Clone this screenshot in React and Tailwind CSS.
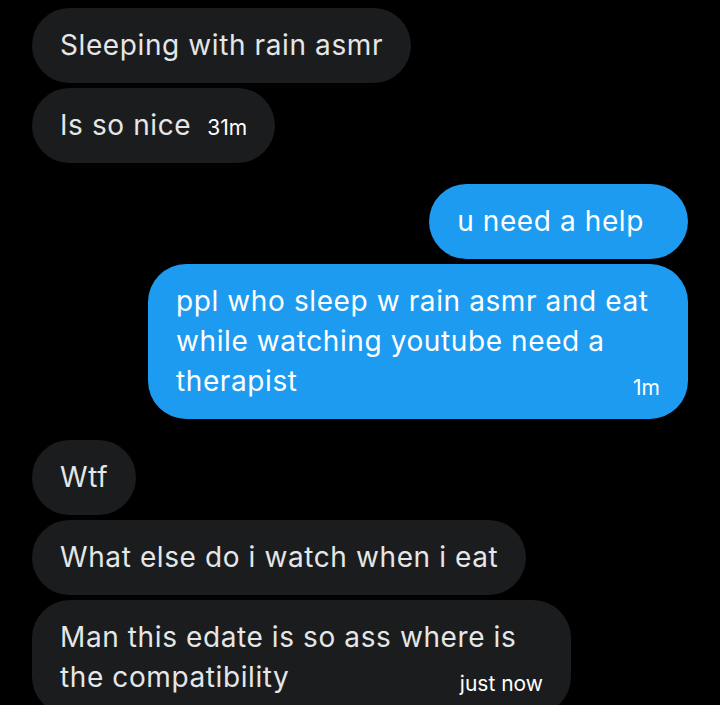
import React from "react";

const font = { fontFamily: "Inter, 'Noto Sans', sans-serif" };

function Gray({ children, className = "" }) {
  return (
    <div className={`self-start rounded-[38px] bg-[#1b1c1e] pl-[28px] pt-[17px] pb-[18px] text-[28px] leading-[40px] tracking-[0.6px] text-[#e4e6e7] ${className}`}>
      {children}
    </div>
  );
}

function Blue({ children, className = "" }) {
  return (
    <div className={`self-end rounded-[38px] bg-[#1d9bf0] pl-[28px] pt-[17px] pb-[18px] text-[28px] leading-[40px] tracking-[0.6px] text-white ${className}`}>
      {children}
    </div>
  );
}

export default function App() {
  return (
    <div className="h-[705px] w-[720px] overflow-hidden bg-black" style={font}>
      <div className="flex flex-col px-[32px] pt-[8px]">
        <div className="flex flex-col gap-[5px]">
          <Gray className="pr-[28px]">Sleeping with rain asmr</Gray>
          <Gray className="pr-[28px]">
            <div className="flex h-[40px] items-baseline gap-[16px]">
              <span>Is so nice</span>
              <span className="text-[21px] leading-none tracking-normal text-white">31m</span>
            </div>
          </Gray>
        </div>
        <div className="mt-[21px] flex flex-col gap-[5px]">
          <Blue className="pr-[44px]">u need a help</Blue>
          <Blue className="w-[540px] pr-[28px]">
            <div>ppl who sleep w rain asmr and eat</div>
            <div>while watching youtube need a</div>
            <div className="flex h-[40px] items-baseline justify-between">
              <span>therapist</span>
              <span className="relative top-[4px] text-[21px] leading-none tracking-normal">1m</span>
            </div>
          </Blue>
        </div>
        <div className="mt-[21px] flex flex-col gap-[5px]">
          <Gray className="pr-[28px]">Wtf</Gray>
          <Gray className="pr-[28px]">What else do i watch when i eat</Gray>
          <Gray className="w-[539px] pr-[28px]">
            <div>Man this edate is so ass where is</div>
            <div className="flex h-[40px] items-baseline justify-between">
              <span>the compatibility</span>
              <span className="relative top-[4px] text-[21px] leading-none tracking-normal text-white">just now</span>
            </div>
          </Gray>
        </div>
      </div>
    </div>
  );
}
